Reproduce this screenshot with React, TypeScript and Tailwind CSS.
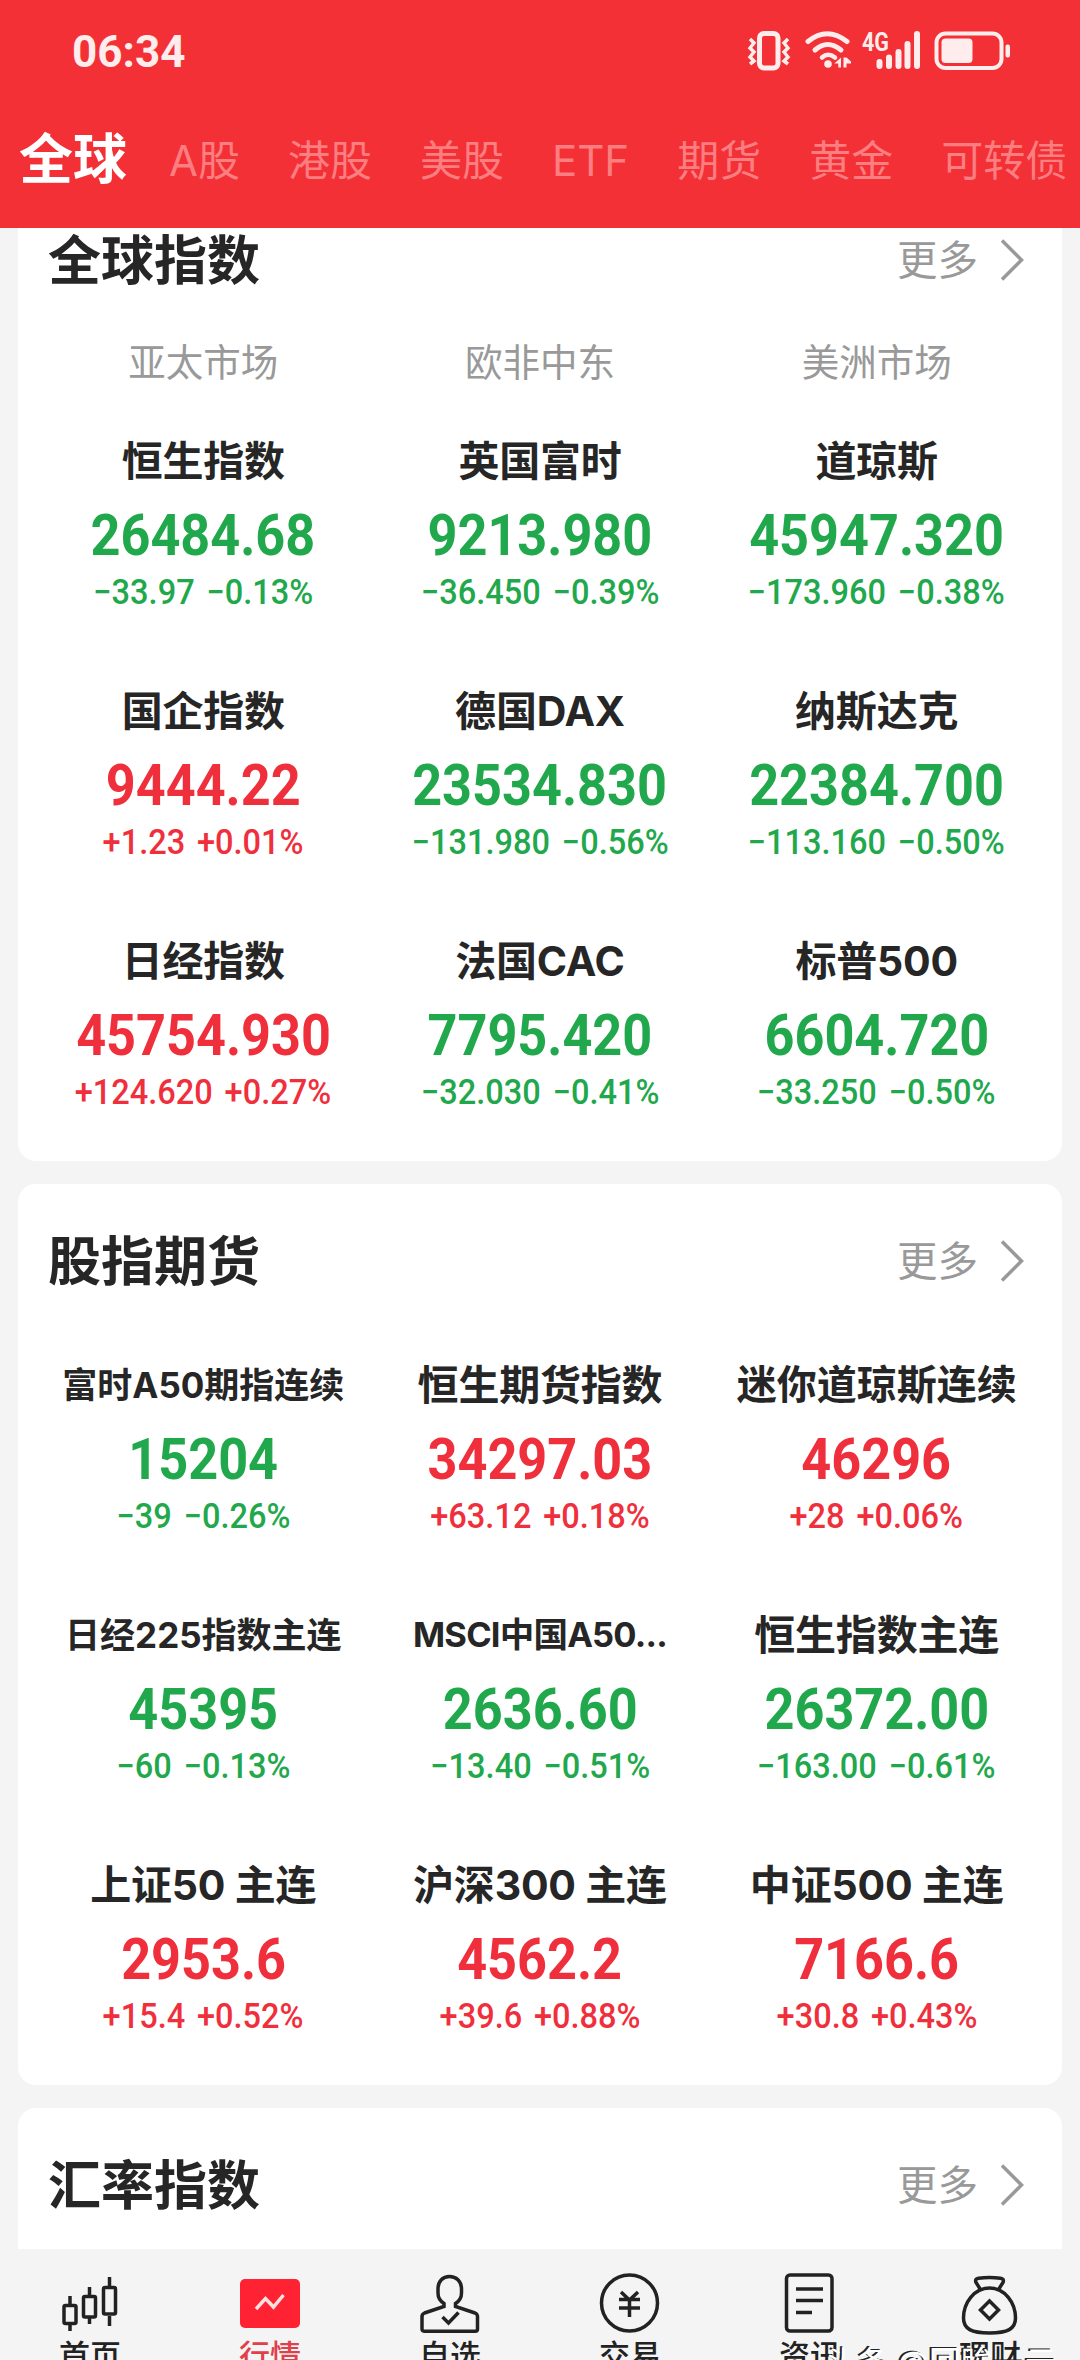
import { ReactNode } from "react";
import clsx from "clsx";

interface Quote {
  name: string;
  value: string;
  change: string;
  up?: boolean;
  size?: keyof typeof nameSizes;
}

// Long names step down in size so they fit the column
const nameSizes = {
  lg: "text-[41px] tracking-[-0.2px]",
  md: "text-[40px]",
  sm: "text-[35px]",
  xs: "text-[34.5px] tracking-[-0.8px]",
};

const tabs = ["A股", "港股", "美股", "ETF", "期货", "黄金", "可转债"];

const globalQuotes: Quote[] = [
  { name: "恒生指数", value: "26484.68", change: "−33.97 −0.13%" },
  { name: "英国富时", value: "9213.980", change: "−36.450 −0.39%" },
  { name: "道琼斯", value: "45947.320", change: "−173.960 −0.38%" },
  { name: "国企指数", value: "9444.22", change: "+1.23 +0.01%", up: true },
  { name: "德国DAX", value: "23534.830", change: "−131.980 −0.56%" },
  { name: "纳斯达克", value: "22384.700", change: "−113.160 −0.50%" },
  { name: "日经指数", value: "45754.930", change: "+124.620 +0.27%", up: true },
  { name: "法国CAC", value: "7795.420", change: "−32.030 −0.41%" },
  { name: "标普500", value: "6604.720", change: "−33.250 −0.50%" },
];

const futuresQuotes: Quote[] = [
  { name: "富时A50期指连续", value: "15204", change: "−39 −0.26%", size: "sm" },
  { name: "恒生期货指数", value: "34297.03", change: "+63.12 +0.18%", up: true },
  { name: "迷你道琼斯连续", value: "46296", change: "+28 +0.06%", up: true, size: "md" },
  { name: "日经225指数主连", value: "45395", change: "−60 −0.13%", size: "sm" },
  { name: "MSCI中国A50...", value: "2636.60", change: "−13.40 −0.51%", size: "xs" },
  { name: "恒生指数主连", value: "26372.00", change: "−163.00 −0.61%" },
  { name: "上证50 主连", value: "2953.6", change: "+15.4 +0.52%", up: true },
  { name: "沪深300 主连", value: "4562.2", change: "+39.6 +0.88%", up: true },
  { name: "中证500 主连", value: "7166.6", change: "+30.8 +0.43%", up: true },
];

export default function App() {
  return (
    <div className="flex h-[2360px] w-[1080px] flex-col overflow-hidden bg-[#f4f4f4] font-['Inter','Noto_Sans_CJK_SC',sans-serif] text-[#262626]">
      <header className="h-[228px] shrink-0 bg-[#f23036]">
        <StatusBar />
        <nav className="flex h-[118px] items-center whitespace-nowrap pl-[19px] leading-none">
          <span className="mr-[42px] text-[54px] font-bold text-white">全球</span>
          <div className="flex gap-[48px] pt-[1px] text-[42px] text-[#fd7e80]">
            {tabs.map((tab) => (
              <span key={tab}>{tab}</span>
            ))}
          </div>
        </nav>
      </header>

      <main className="flex h-[2021px] shrink-0 flex-col gap-[23px] overflow-hidden px-[18px]">
        <Card title="全球指数" className="h-[933px] rounded-b-[18px]" headClass="h-[64px]">
          <div className="grid h-[138px] grid-cols-3 items-center px-[17px] pt-[3px] text-center text-[37.5px] leading-none text-[#999]">
            <span>亚太市场</span>
            <span>欧非中东</span>
            <span>美洲市场</span>
          </div>
          <QuoteGrid quotes={globalQuotes} />
        </Card>
        <Card title="股指期货" className="h-[901px] rounded-[18px]" headClass="h-[153px]">
          <div className="h-[17px]" />
          <QuoteGrid quotes={futuresQuotes} />
        </Card>
        <Card title="汇率指数" className="h-[300px] rounded-t-[18px]" headClass="h-[153px]" />
      </main>

      <BottomNav />
    </div>
  );
}

function StatusBar() {
  return (
    <div className="flex h-[101px] items-center pl-[72px] text-[#ffecec]">
      <span className="w-[675px] pt-[2px] font-['Roboto',sans-serif] text-[44px] font-bold leading-none">06:34</span>
      {/* vibrate */}
      <svg width="44" height="42" viewBox="0 0 44 42" fill="none" stroke="currentColor">
        <rect x="12.5" y="3.5" width="18.500" height="34.500" rx="4.500" strokeWidth="5" />
        <path d="M3 9l4 4-4 5 4 4-4 5 4 4-4 3M41 9l-4 4 4 5-4 4 4 5-4 4 4 3" strokeWidth="3.500" />
      </svg>
      {/* wifi */}
      <svg className="ml-[13px]" width="49" height="42" viewBox="0 0 49 42" fill="none" stroke="currentColor" strokeLinecap="round">
        <path d="M4 11.500q19-15.500 39 0" strokeWidth="5" />
        <path d="M11 20q12.500-11 26 0" strokeWidth="5" />
        <path d="M18 27.500q6-5.500 13 0" strokeWidth="4.500" />
        <circle cx="24" cy="34" r="3.800" fill="currentColor" stroke="none" />
        <path d="M37 27.500v10h-2.700v-4h-4zM39.500 27.500h3l4.500 4v2h-4.500v4h-3z" fill="currentColor" stroke="none" />
      </svg>
      {/* mobile signal */}
      <svg className="ml-[10px] overflow-visible" width="60" height="42" viewBox="0 0 60 42" fill="none" stroke="currentColor" strokeLinecap="round" strokeWidth="6">
        <text x="-1" y="21" fontSize="26" fontWeight="700" fontFamily="Roboto" textLength="27" lengthAdjust="spacingAndGlyphs" fill="currentColor" stroke="none">
          4G
        </text>
        <path d="M16.500 32v4M26 27.500v8.500M35.500 22v14M44.500 14v22M54 4v32" />
      </svg>
      {/* battery */}
      <svg className="ml-[11px]" width="78" height="42" viewBox="0 0 78 42" fill="none" stroke="currentColor">
        <rect x="2.500" y="3.500" width="65" height="34.500" rx="9" strokeWidth="4" />
        <rect x="7.500" y="8.500" width="31" height="24.500" rx="4" fill="currentColor" stroke="none" />
        <rect x="71.500" y="14.500" width="4.500" height="13" rx="2" fill="currentColor" stroke="none" />
      </svg>
    </div>
  );
}

interface CardProps {
  title: string;
  className: string;
  headClass: string;
  children?: ReactNode;
}

function Card({ title, className, headClass, children }: CardProps) {
  return (
    <section className={clsx("shrink-0 bg-white", className)}>
      <div className={clsx("flex items-center pl-[30px] pr-[37px]", headClass)}>
        <h2 className="flex-1 pt-[3px] text-[53px] font-bold leading-none">{title}</h2>
        <span className="pt-[3px] text-[40.5px] leading-none text-[#999]">更多</span>
        <svg className="ml-[21px]" width="26" height="44" viewBox="0 0 26 44" fill="none" stroke="#999" strokeWidth="3.500">
          <path d="M3 2.500L22.500 22 3 41.500" />
        </svg>
      </div>
      {children}
    </section>
  );
}

function QuoteGrid({ quotes }: { quotes: Quote[] }) {
  return (
    <div className="grid grid-cols-3 px-[17px]">
      {quotes.map((quote) => (
        <QuoteCell key={quote.name} quote={quote} />
      ))}
    </div>
  );
}

function QuoteCell({ quote }: { quote: Quote }) {
  return (
    <div className="flex h-[250px] flex-col items-center whitespace-nowrap">
      <div className={clsx("flex h-[60px] items-center whitespace-pre pt-[2px] font-bold leading-none", nameSizes[quote.size ?? "lg"])}>
        {quote.name}
      </div>
      <div className={clsx("flex flex-col items-center font-['Roboto',sans-serif]", quote.up ? "text-[#f02f3d]" : "text-[#22a84c]")}>
        <span className="mt-[14px] h-[62px] scale-x-[0.9] text-[58px] font-bold leading-[62px]">{quote.value}</span>
        <span className="mt-[7px] h-[40px] scale-x-[0.93] text-[35px] font-medium leading-[40px] [word-spacing:4px]">{quote.change}</span>
      </div>
    </div>
  );
}

function BottomNav() {
  return (
    <footer className="relative grid h-[111px] shrink-0 grid-cols-6 bg-[#f4f4f4]">
      <NavItem label="首页">
        <path d="M10 17v8M10 46v6M29.500 8v8M29.500 39v6M49.500-2v9M49.500 37v10" />
        <rect x="4" y="26.500" width="12" height="18" rx="1.500" />
        <rect x="23.500" y="17.500" width="12" height="20.500" rx="1.500" />
        <rect x="43.500" y="8.500" width="12" height="26.500" rx="1.500" />
      </NavItem>
      <NavItem label="行情" active>
        <rect x="0" y="0" width="60" height="49" rx="5" fill="#ff2233" stroke="none" />
        <path d="M16 30l9.500-10.500 8 8.500L43.500 16" stroke="#ffe0e0" />
      </NavItem>
      <NavItem label="自选">
        <path d="M24 25.500v-1c-4-2.500-6-6-6-10.500v-4C18 2 23-2.500 29.500-2.500S41.500 2 41.500 10v4c0 4.500-2 8-6 10.500v3L55 34c2 .8 2.500 1.800 2.500 3.500V50c0 1.500-.8 2.200-2.200 2.200H4C2.700 52.200 2 51.500 2 50V37.500c0-1.700.7-2.700 2.500-3.500L24 27.500z" />
        <path d="M22.500 38l6 6 10-10.500" />
      </NavItem>
      <NavItem label="交易">
        <circle cx="29.500" cy="24" r="28" />
        <path d="M21 13l8.500 8L38 13M19 20.500h21M19 29h21M29.500 21v17" />
      </NavItem>
      <NavItem label="资讯">
        <rect x="6.500" y="-4" width="45.500" height="56" rx="3.500" />
        <path d="M16 10h27M16 21.500h27M16 33.500h16" />
      </NavItem>
      <NavItem label="理财">
        <path d="M20.500 10.500l-4.500-7c-1-2.500 0-4 2.500-4.300q11-1.500 22 0c2.500.3 3.500 1.800 2.500 4.300l-4.500 7" />
        <path d="M29.500 9C14 9 3.500 24 3.500 39c0 11 8 15 26 15s26-4 26-15c0-15-10.500-30-26-30z" />
        <path d="M29.500 22l9 9-9 9-9-9z" />
      </NavItem>
      <span className="absolute left-[825px] top-[98px] whitespace-nowrap text-[32px] leading-none text-white [text-shadow:-2px_-1px_0_#222]">
        头条 @回眸一云
      </span>
    </footer>
  );
}

interface NavItemProps {
  label: string;
  active?: boolean;
  children: ReactNode;
}

function NavItem({ label, active, children }: NavItemProps) {
  return (
    <div className={clsx("flex flex-col items-center pt-[30px]", active ? "text-[#e0404a]" : "text-[#222]")}>
      <svg className="shrink-0 overflow-visible" width="60" height="58" viewBox="0 0 60 58" fill="none" stroke="currentColor" strokeWidth="3.500">
        {children}
      </svg>
      <span className="mt-[2px] text-[31px] font-medium leading-[34px]">{label}</span>
    </div>
  );
}
